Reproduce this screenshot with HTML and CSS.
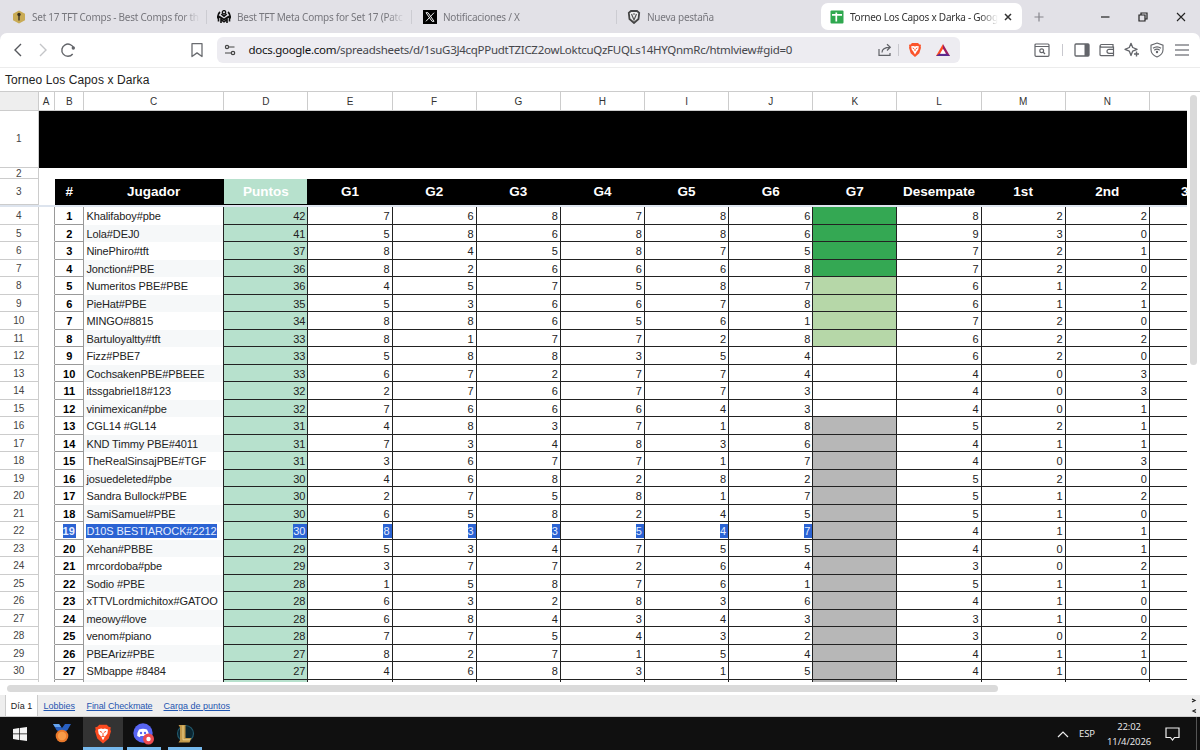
FILE: index.html
```html
<!DOCTYPE html>
<html lang="es">
<head>
    <meta charset="UTF-8">
    <meta name="viewport" content="width=device-width, initial-scale=1.0">
    <title>Torneo Los Capos x Darka</title>
    <link rel="stylesheet" href="styles.css">
</head>
<body>

<!-- Tabs -->
<div class="tab-strip">
    <div class="tab">
        <svg class="favicon" viewBox="0 0 14 14"><path d="M7 0.5l6 3.3v6.4l-6 3.3-6-3.3V3.800z" fill="#c9ab55"/><circle cx="7" cy="4.500" r="1.700" fill="#3b3220"/><path d="M6.300 5h1.400v5.500H6.300z" fill="#3b3220"/></svg>
        <span class="tab-title">Set 17 TFT Comps - Best Comps for th</span>
    </div>
    <div class="tab">
        <svg class="favicon" viewBox="0 0 14 14"><circle cx="7" cy="2.300" r="1.700" fill="none" stroke="#111" stroke-width="1.300"/><path d="M3 2C1 3.500.6 6 .8 8.500M11 2c2 1.500 2.400 4 2.200 6.500M1.500 11.500V6L7 9.500 12.500 6v5.500M4 13V9.500l3 2.300 3-2.300V13M4.300 4L7 6.300 9.700 4" fill="none" stroke="#111" stroke-width="1.600"/></svg>
        <span class="tab-title">Best TFT Meta Comps for Set 17 (Patc</span>
    </div>
    <div class="tab">
        <svg class="favicon" viewBox="0 0 14 14"><path d="M0 0h14v14H0z" fill="#000"/><path d="M3 2.700h2l6 8.600H9zM11 2.700L3 11.300" fill="none" stroke="#eee" stroke-width="1"/></svg>
        <span class="tab-title">Notificaciones / X</span>
    </div>
    <div class="tab last">
        <svg class="favicon" viewBox="0 0 14 14"><path d="M4 1h6l2.200 1.800L11.500 9 7 13 2.500 9 1.800 2.800z" fill="#eee" stroke="#444" stroke-width="1.800"/><path d="M4.500 4L7 10l2.500-6M6 4h2" fill="none" stroke="#555" stroke-width="1.200"/></svg>
        <span class="tab-title">Nueva pestaña</span>
    </div>
    <div class="tab active">
        <svg class="favicon" viewBox="0 0 14 14"><rect x="0.500" y="0.500" width="13" height="13" rx="1" fill="#2fa84f"/><path d="M2 4.800h10M6.300 2.500v9" stroke="#fff" stroke-width="1.700"/></svg>
        <span class="tab-title">Torneo Los Capos x Darka - Goog</span>
        <svg class="close" viewBox="0 0 8 8"><path d="M1 1l6 6M7 1L1 7" stroke="#333" stroke-width="1.500"/></svg>
    </div>
    <svg class="new-tab" viewBox="0 0 10 10"><path d="M5 .5v9M.5 5h9" stroke="#85858c" stroke-width="1.200"/></svg>
    <div class="window-buttons">
        <svg viewBox="0 0 10 10"><path d="M1 5h8.500" stroke="#222" stroke-width="1.200"/></svg>
        <svg viewBox="0 0 10 10"><path d="M1 3h6v6H1zM3 3V1h6v6H7" fill="none" stroke="#222" stroke-width="1.200"/></svg>
        <svg viewBox="0 0 10 10"><path d="M1 1l8 8M9 1L1 9" stroke="#222" stroke-width="1.100"/></svg>
    </div>
</div>

<!-- Toolbar -->
<div class="toolbar-wrap">
<div class="toolbar">
    <svg class="nav back" viewBox="0 0 16 16"><path d="M11 2L5 8l6 6" fill="none" stroke="#55575c" stroke-width="1.400"/></svg>
    <svg class="nav forward" viewBox="0 0 16 16"><path d="M5 2l6 6-6 6" fill="none" stroke="#c4c5c8" stroke-width="1.400"/></svg>
    <svg class="nav reload" viewBox="0 0 16 16"><path d="M13.800 6.500A6.100 6.100 0 1 0 12.700 12" fill="none" stroke="#63656a" stroke-width="1.400"/><circle cx="13.300" cy="6" r="1.700" fill="#63656a"/></svg>
    <svg class="nav bookmark" viewBox="0 0 16 16"><path d="M3 1.700h10v12.800l-5-3.600-5 3.600z" fill="none" stroke="#6a6c70" stroke-width="1.300" stroke-linejoin="round"/></svg>
    <div class="address">
        <svg class="tune" viewBox="0 0 12 12"><path d="M5 3h5.500M1 9h6" stroke="#444" stroke-width="1.200"/><circle cx="3" cy="3" r="1.600" fill="#edecf1" stroke="#444" stroke-width="1.200"/><circle cx="9" cy="9" r="1.700" fill="#edecf1" stroke="#444" stroke-width="1.200"/></svg>
        <span class="url"><b>docs.google.com</b>/spreadsheets/d/1suG3J4cqPPudtTZICZ2owLoktcuQzFUQLs14HYQnmRc/htmlview#gid=0</span>
        <svg class="share" viewBox="0 0 14 14"><path d="M1 6v6.300h11V10M4 9.500C4 6 6.500 4.300 12 4.300M9 1.200l3.300 3.100L9 7.500" fill="none" stroke="#606267" stroke-width="1.200"/></svg>
        <i class="divider"></i>
        <svg class="lion" viewBox="0 0 14 16"><path d="M4 1h6l1.500 1.500 1.500.3-.3 2 .3 1-1.700 5.500L7 15l-4.300-3.700L1 5.800l.3-1-.3-2 1.500-.3z" fill="#fb542b"/><path d="M3.200 4.300L5.500 4 7 4.500 8.500 4l2.300.3-.5 3.200-1.600 2L7 12.500 5.300 9.500l-1.600-2z" fill="#fff"/><path d="M4.700 6l1.500.7M9.300 6l-1.500.7M7 7v2" stroke="#fb542b"/></svg>
        <svg class="bat" viewBox="0 0 16 14"><path d="M8 1L1 13h3.500L8 6.500z" fill="#ff4a1f"/><path d="M8 1l7 12h-3.500L8 6.500z" fill="#9b1f62"/><path d="M1 13h14l-3.500-2.500h-7z" fill="#5b2b90"/><path d="M8 5.800l-3 5h6z" fill="#fff"/></svg>
    </div>
    <div class="tools">
        <svg viewBox="0 0 16 16"><rect x="1" y="2" width="14" height="12.300" rx="1" fill="none" stroke="#63656a" stroke-width="1.200"/><path d="M1 4.500h14" stroke="#63656a"/><circle cx="7.700" cy="8.700" r="1.900" fill="none" stroke="#63656a" stroke-width="1.200"/><path d="M9 10l2 2" stroke="#63656a" stroke-width="1.200"/></svg>
        <i class="divider"></i>
        <svg viewBox="0 0 16 16"><rect x="1" y="2" width="14" height="12" rx="1" fill="none" stroke="#63656a" stroke-width="1.300"/><path d="M10.500 2H15v12h-4.500z" fill="#63656a"/></svg>
        <svg viewBox="0 0 16 16"><path d="M14 5V2.500H2.500a1.300 1.300 0 0 0 0 2.600H14.500v8.500H2q-1 0-1-1V3.500M14.500 7.300H10a2 2 0 0 0 0 4h4.500" fill="none" stroke="#63656a" stroke-width="1.200"/></svg>
        <svg viewBox="0 0 16 16"><path d="M7 1.300l1.700 4.200 4.400 1.800-4.400 1.800L7 13.500 5.300 9.100 1 7.300l4.300-1.800z" fill="none" stroke="#63656a" stroke-width="1.300" stroke-linejoin="round"/><path d="M12.500 9.500v5M10 12h5" stroke="#63656a" stroke-width="1.400"/></svg>
        <svg viewBox="0 0 16 16"><path d="M8 1l6 2.200v4.500c0 3.400-2.500 5.800-6 7.300-3.500-1.500-6-3.900-6-7.300V3.200z" fill="none" stroke="#63656a" stroke-width="1.100"/><path d="M4 6.300q4-3 8 0M5.300 8.200q2.700-2 5.400 0" fill="none" stroke="#63656a" stroke-width="1.200"/><circle cx="8" cy="10" r="1.200" fill="#63656a"/></svg>
        <svg viewBox="0 0 16 16"><path d="M1 3h14M1 8h14M1 13h14" stroke="#85878c" stroke-width="1.300"/></svg>
    </div>
</div>
</div>

<!-- Spreadsheet -->
<div class="doc-title">Torneo Los Capos x Darka</div>
<div class="viewer">
    <div class="sheet" id="sheet"></div>
    <div class="v-scroll"><div class="v-thumb"></div></div>
</div>
<div class="h-scroll"><div class="h-thumb"></div></div>

<div class="sheet-tabs">
    <span class="current">Día 1</span>
    <a class="lobbies">Lobbies</a>
    <a class="final">Final Checkmate</a>
    <a class="carga">Carga de puntos</a>
    <svg class="sheet-arrows" viewBox="0 0 6 16"><path d="M1 2l3 1.500L1 5M5 12.500L2 14l3 1.500" fill="none" stroke="#222" stroke-width="1.200"/></svg>
</div>

<!-- Taskbar -->
<div class="taskbar">
    <div class="task"><svg width="14" height="14" viewBox="0 0 14 14"><path d="M0 2l6-.9v5.500H0zM6.700 1L14 0v6.600H6.700zM0 7.300h6v5.600L0 12zM6.700 7.300H14V14l-7.300-1z" fill="#f2f2f2"/></svg></div>
    <div class="task"><svg width="20" height="20" viewBox="0 0 20 20"><path d="M1 1h6l3 4 3-4h6l-3.500 6-3 2h-5l-3-2z" fill="#285fc0"/><path d="M1 1h6l2 3H3z" fill="#67a5ee"/><circle cx="10" cy="13" r="6.300" fill="#e9782a"/><circle cx="10" cy="13" r="4.200" fill="#f89b48"/></svg></div>
    <div class="task open focused"><svg width="18" height="20" viewBox="0 0 14 16"><path d="M4 .5h6l1.500 1.700 1.700.3-.3 2 .5 1.300-1.800 5.800L7 15.500l-4.600-3.900L.6 5.800l.5-1.300-.3-2 1.700-.3z" fill="#fb4a20"/><path d="M3 4.300L5.500 3.500 7 4l1.500-.5 2.500.8-.5 3.400-1.700 2L7 13 5.200 9.700l-1.700-2z" fill="#fff"/><path d="M4.500 5.900l1.700.8M9.500 5.900l-1.700.8M7 7v2.500M5.500 10.500L7 9.700l1.500.8" fill="none" stroke="#fb4a20" stroke-width=".8"/></svg></div>
    <div class="task open"><svg width="22" height="22" viewBox="0 0 22 22"><circle cx="10" cy="10" r="9.700" fill="#5865f2"/><path d="M6 6.500q4-1.500 8 0 2 3 1.800 6.500l-2.500 1.300-.8-1.300h-5l-.8 1.300L4.200 13Q4 9.500 6 6.500z" fill="#fff"/><circle cx="8" cy="10" r="1.200" fill="#5865f2"/><circle cx="12" cy="10" r="1.200" fill="#5865f2"/><circle cx="15.500" cy="16" r="5.500" fill="#ed4b50"/><circle cx="15.500" cy="16" r="2.200" fill="#fff"/></svg></div>
    <div class="task open"><svg width="20" height="20" viewBox="0 0 20 20"><circle cx="10.500" cy="9.500" r="8" fill="#0b2631" stroke="#21576a" stroke-width="1.200"/><path d="M3.500 1h7v13h6l-2 4.500h-11l1.500-2.300V3.200z" fill="#c39a4b"/><path d="M8 1.500v14.300h7" fill="none" stroke="#ead08a"/></svg></div>
    <div class="tray">
        <svg class="chevron" viewBox="0 0 12 8"><path d="M1 7l5-5 5 5" fill="none" stroke="#eee" stroke-width="1.200"/></svg>
        <span class="lang">ESP</span>
        <div class="clock"><span>22:02</span><span>11/4/2026</span></div>
        <svg class="notice" viewBox="0 0 15 14"><path d="M1 1h13v9.500H9.500L7.500 13l-2-2.500H1z" fill="none" stroke="#eee" stroke-width="1.200"/></svg>
    </div>
</div>

<script src="script.js"></script>
</body>
</html>
```

FILE: styles.css
```css
* {
    box-sizing: border-box;
}
body {
    margin: 0;
    width: 1200px;
    height: 750px;
    overflow: hidden;
    display: flex;
    flex-direction: column;
    background: #fff;
    font-family: "Liberation Sans", Arial, sans-serif;
}
svg {
    display: block;
    flex: none;
}

/* Browser tabs */
.tab-strip {
    display: flex;
    height: 33px;
    flex: none;
    align-items: center;
    background: #e2e1e7;
    font-family: "Noto Sans", sans-serif;
    font-size: 10px;
    letter-spacing: -0.25px;
    color: #77777d;
}
.tab {
    display: flex;
    align-items: center;
    width: 205px;
    height: 14px;
    padding-left: 11px;
    border-right: 1px solid #ccccd2;
}
.tab:first-child {
    width: 207px;
    padding-left: 12px;
}
.tab:nth-child(2) {
    padding-left: 10px;
}
.tab.last {
    padding-left: 10px;
    border: none;
}
.favicon {
    width: 14px;
    height: 14px;
    margin-right: 6px;
}
.tab-title {
    width: 168px;
    overflow: hidden;
    white-space: nowrap;
    line-height: 16px;
    -webkit-mask-image: linear-gradient(to right, #000 150px, transparent 168px);
}
.tab.active {
    width: 201px;
    height: 27px;
    margin-left: -1px;
    padding-left: 9px;
    border: none;
    border-radius: 7px;
    background: #fff;
    color: #333;
}
.active .tab-title {
    width: 148px;
    -webkit-mask-image: linear-gradient(to right, #000 130px, transparent 148px);
}
.close {
    width: 8px;
    height: 8px;
    margin-left: 6px;
}
.new-tab {
    width: 10px;
    height: 10px;
    margin-left: 12px;
}
.window-buttons {
    display: flex;
    gap: 28px;
    margin-left: auto;
    margin-right: 14px;
}
.window-buttons svg {
    width: 10px;
    height: 10px;
}

/* Toolbar */
.toolbar-wrap {
    flex: none;
    background: #e2e1e7;
}
.toolbar {
    display: flex;
    align-items: center;
    height: 35px;
    padding: 0 10px 0 10px;
    background: #fff;
    border-bottom: 1px solid #ececec;
    border-radius: 7px 7px 0 0;
}
.nav {
    width: 16px;
    height: 16px;
}
.forward {
    margin-left: 9px;
}
.reload {
    margin-left: 9px;
}
.bookmark {
    margin-left: 113px;
}
.address {
    display: flex;
    align-items: center;
    width: 743px;
    height: 26px;
    margin-left: 12px;
    padding-left: 7px;
    border-radius: 6px;
    background: #edecf1;
}
.tune {
    width: 12px;
    height: 12px;
}
.url {
    width: 624px;
    margin-left: 12.5px;
    white-space: nowrap;
    font-family: "Noto Sans", sans-serif;
    font-size: 11.5px;
    letter-spacing: -0.29px;
    line-height: 18px;
    color: #45464b;
}
.url b {
    font-weight: normal;
    color: #111;
}
.share {
    width: 14px;
    height: 14px;
    margin-left: 5px;
}
.divider {
    width: 1px;
    height: 12px;
    background: #c8c8ce;
}
.address .divider {
    margin-left: 6px;
}
.lion {
    width: 14px;
    height: 16px;
    margin-left: 9px;
}
.bat {
    width: 16px;
    height: 14px;
    margin-left: 13px;
}
.tools {
    display: flex;
    align-items: center;
    gap: 9px;
    margin-left: auto;
}
.tools svg {
    width: 16px;
    height: 16px;
}
.tools .divider {
    margin: 0 2px 0 3px;
}

/* Document */
.doc-title {
    flex: none;
    height: 23px;
    padding-left: 5px;
    font-size: 12px;
    letter-spacing: 0.1px;
    line-height: 24px;
    color: #222;
}
.viewer {
    display: flex;
    flex: none;
    height: 591px;
}
.sheet {
    width: 1187px;
    overflow: hidden;
    border-top: 1px solid #ccc;
    font-size: 11px;
    color: #222;
}
.row {
    display: grid;
    grid-template-columns: 38.5px 16.1px 29.3px 140.4px repeat(12, 84.15px);
    grid-template-rows: 100%;
    height: 17.5px;
    width: 1235px;
}
.cell {
    border-right: 1px solid #222;
    border-bottom: 1px solid #222;
    padding-right: 2px;
    text-align: right;
    line-height: 18px;
    white-space: nowrap;
}
.cell.num {
    border-color: #ccc;
    padding: 0;
    text-align: center;
    font-size: 10px;
    color: #444;
}
.cell.empty {
    border-color: transparent #999 transparent transparent;
}
.cell.pos {
    border-color: #999;
    padding: 0 0 0 1px;
    text-align: center;
    font-weight: bold;
    color: #000;
}
.cell.name {
    border-bottom: none;
    padding-left: 2.5px;
    text-align: left;
    letter-spacing: -0.1px;
}
.even .name {
    background: #f6f8f9;
}
.cell.points {
    background: #b7e1cd;
}
.green {
    background: #34a853;
}
.light-green {
    background: #b6d7a8;
}
.gray {
    background: #b7b7b7;
}

/* Highlighted text of the selected row */
.selected .pos span,
.selected .name span,
.selected .points span,
.selected .score span {
    display: inline-block;
    height: 14px;
    line-height: 14px;
    background: #2b63d3;
    color: #e6eeff;
}
.selected .points span,
.selected .score span {
    margin-right: -2px;
    padding-right: 2px;
}
.selected .pos span,
.selected .name span {
    padding-right: 1px;
}

/* Column letters and frozen rows */
.row.letters {
    height: 19px;
}
.letters .cell {
    border-color: #ccc;
    padding: 0;
    text-align: center;
    line-height: 19px;
    font-size: 10px;
    color: #333;
}
.letters .cell:first-child {
    background: #eee;
}
.letters .cell:nth-child(3) {
    padding-left: 1px;
}
.row.banner {
    display: flex;
    height: 57px;
}
.banner .cell.num {
    width: 38.5px;
    line-height: 56px;
}
.banner-fill {
    flex: 1;
    background: #000;
}
.row.spacer {
    display: flex;
    height: 11px;
}
.spacer .cell.num {
    width: 38.5px;
    line-height: 11px;
}
.row.heads {
    height: 25.5px;
}
.heads .cell {
    border-color: #000;
    background: #000;
    padding: 0;
    text-align: center;
    font-size: 13.5px;
    font-weight: bold;
    line-height: 25px;
    color: #fff;
}
.heads .cell.num {
    border-color: #ccc;
    background: #fff;
    font-size: 10px;
    font-weight: normal;
    color: #444;
}
.heads .cell.blank {
    border-color: transparent;
    background: #fff;
}
.heads .cell.points {
    background: #b7e1cd;
}
.heads .cell:nth-child(3) {
    padding-left: 1px;
}
.freeze {
    height: 2.5px;
    background: #dde4ee;
}

/* Scrollbars */
.v-scroll {
    width: 13px;
    padding: 3px 0 0 3px;
    border-top: 1px solid #ccc;
}
.v-thumb {
    width: 7px;
    height: 270px;
    border-radius: 4px;
    background: #dadada;
}
.h-scroll {
    flex: none;
    height: 13px;
    padding: 3px 0 0 7px;
}
.h-thumb {
    width: 991px;
    height: 7px;
    border-radius: 4px;
    background: #dadada;
}

/* Sheet tabs */
.sheet-tabs {
    display: flex;
    flex: none;
    height: 22px;
    padding-left: 5px;
    background: #eee;
    border-bottom: 1px solid #d0d0d0;
    font-size: 9px;
    line-height: 22px;
    white-space: nowrap;
}
.current {
    width: 33px;
    border: 1px solid #ccc;
    border-width: 0 1px;
    background: #fff;
    text-align: center;
    color: #222;
}
.sheet-tabs a {
    color: #1f55b0;
    text-decoration: underline;
}
.lobbies {
    width: 43px;
    margin-left: 5.5px;
}
.final {
    width: 77px;
    letter-spacing: -0.1px;
}
.sheet-arrows {
    width: 6px;
    height: 16px;
    margin: 2px 3px 0 auto;
}

/* Taskbar */
.taskbar {
    display: flex;
    flex: none;
    height: 33px;
    background: #101010;
    font-family: "Open Sans", sans-serif;
    color: #eee;
}
.task {
    display: flex;
    align-items: center;
    justify-content: center;
    width: 34px;
    margin-left: 7px;
    border-bottom: 3px solid transparent;
}
.task:first-child {
    margin-left: 3px;
    padding-top: 3px;
}
.task:nth-child(2) {
    margin-left: 8px;
    padding-top: 2px;
}
.task.open {
    padding-top: 3px;
    border-bottom-color: #76b9ed;
}
.task.focused {
    width: 40px;
    margin: 0 -3px 0 4px;
    background: #333;
}
.tray {
    display: flex;
    align-items: center;
    margin-left: auto;
    padding-right: 16px;
    border-right: 1px solid #555;
    margin-right: 3px;
    font-size: 9.5px;
    letter-spacing: -0.1px;
}
.chevron {
    width: 12px;
    height: 8px;
}
.lang {
    width: 16px;
    margin-left: 10px;
}
.clock {
    display: flex;
    flex-direction: column;
    width: 44px;
    margin: 0 14px 0 12px;
    text-align: center;
    line-height: 15px;
}
.notice {
    width: 15px;
    height: 14px;
}
```

FILE: script.js
```js
// name, points, G1-G6, desempate, 1st, 2nd
const players = [
    ["Khalifaboy#pbe", 42, 7, 6, 8, 7, 8, 6, 8, 2, 2],
    ["Lola#DEJ0", 41, 5, 8, 6, 8, 8, 6, 9, 3, 0],
    ["NinePhiro#tft", 37, 8, 4, 5, 8, 7, 5, 7, 2, 1],
    ["Jonction#PBE", 36, 8, 2, 6, 6, 6, 8, 7, 2, 0],
    ["Numeritos PBE#PBE", 36, 4, 5, 7, 5, 8, 7, 6, 1, 2],
    ["PieHat#PBE", 35, 5, 3, 6, 6, 7, 8, 6, 1, 1],
    ["MINGO#8815", 34, 8, 8, 6, 5, 6, 1, 7, 2, 0],
    ["Bartuloyaltty#tft", 33, 8, 1, 7, 7, 2, 8, 6, 2, 2],
    ["Fizz#PBE7", 33, 5, 8, 8, 3, 5, 4, 6, 2, 0],
    ["CochsakenPBE#PBEEE", 33, 6, 7, 2, 7, 7, 4, 4, 0, 3],
    ["itssgabriel18#123", 32, 2, 7, 6, 7, 7, 3, 4, 0, 3],
    ["vinimexican#pbe", 32, 7, 6, 6, 6, 4, 3, 4, 0, 1],
    ["CGL14 #GL14", 31, 4, 8, 3, 7, 1, 8, 5, 2, 1],
    ["KND Timmy PBE#4011", 31, 7, 3, 4, 8, 3, 6, 4, 1, 1],
    ["TheRealSinsajPBE#TGF", 31, 3, 6, 7, 7, 1, 7, 4, 0, 3],
    ["josuedeleted#pbe", 30, 4, 6, 8, 2, 8, 2, 5, 2, 0],
    ["Sandra Bullock#PBE", 30, 2, 7, 5, 8, 1, 7, 5, 1, 2],
    ["SamiSamuel#PBE", 30, 6, 5, 8, 2, 4, 5, 5, 1, 0],
    ["D10S BESTIAROCK#2212", 30, 8, 3, 3, 5, 4, 7, 4, 1, 1],
    ["Xehan#PBBE", 29, 5, 3, 4, 7, 5, 5, 4, 0, 1],
    ["mrcordoba#pbe", 29, 3, 7, 7, 2, 6, 4, 3, 0, 2],
    ["Sodio #PBE", 28, 1, 5, 8, 7, 6, 1, 5, 1, 1],
    ["xTTVLordmichitox#GATOO", 28, 6, 3, 2, 8, 3, 6, 4, 1, 0],
    ["meowy#love", 28, 6, 8, 4, 3, 4, 3, 3, 1, 0],
    ["venom#piano", 28, 7, 7, 5, 4, 3, 2, 3, 0, 2],
    ["PBEAriz#PBE", 27, 8, 2, 7, 1, 5, 4, 4, 1, 1],
    ["SMbappe #8484", 27, 4, 6, 8, 3, 1, 5, 4, 1, 0]
];

function cell(text, cls) {
    return `<div class="cell ${cls || ""}"><span>${text}</span></div>`;
}

function g7Color(i) {
    if (i < 4) return "green";
    if (i < 8) return "light-green";
    if (i < 12) return "";
    return "gray";
}

let html = '<div class="row letters">' + cell("");
"ABCDEFGHIJKLMN".split("").forEach(letter => {
    html += cell(letter);
});
html += cell("") + '</div>';

html += '<div class="row banner">' + cell(1, "num") + '<div class="banner-fill"></div></div>';
html += '<div class="row spacer">' + cell(2, "num") + '</div>';

const heads = ["Jugador", "Puntos", "G1", "G2", "G3", "G4", "G5", "G6", "G7", "Desempate", "1st", "2nd", "3rd"];
html += '<div class="row heads">' + cell(3, "num") + cell("", "blank") + cell("#");
heads.forEach(head => {
    html += cell(head, head === "Puntos" ? "points" : "");
});
html += '</div><div class="freeze"></div>';

players.forEach((p, i) => {
    html += `<div class="row ${i % 2 ? "even" : ""} ${i === 18 ? "selected" : ""}">`;
    html += cell(i + 4, "num") + cell("", "empty") + cell(i + 1, "pos");
    html += cell(p[0], "name") + cell(p[1], "points");
    p.slice(2, 8).forEach(score => {
        html += cell(score, "score");
    });
    html += cell("", g7Color(i));
    p.slice(8).forEach(value => {
        html += cell(value);
    });
    html += cell("") + '</div>';
});

// start of the next row, cut off by the scroll area
html += '<div class="row even">' + cell("", "num") + cell("", "empty") + cell("", "pos") + cell("", "name") + cell("", "points");
for (let i = 0; i < 11; i++) {
    html += cell("", i === 6 ? "gray" : "");
}
html += '</div>';

document.getElementById("sheet").innerHTML = html;
```
